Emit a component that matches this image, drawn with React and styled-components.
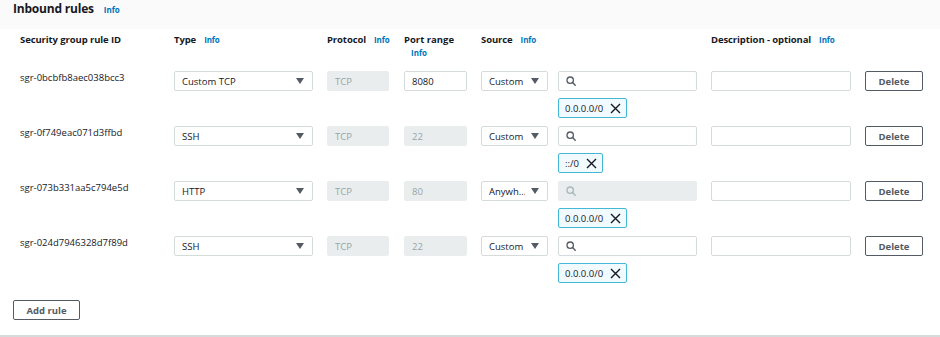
import React from 'react'
import styled, { createGlobalStyle } from 'styled-components'

const Global = createGlobalStyle`
  body {
    margin: 0;
    background: #ffffff;
    font-family: "Open Sans", "Noto Sans", sans-serif;
    color: #16191f;
  }
`

const Panel = styled.div`
  width: 940px;
  height: 337px;
  box-sizing: border-box;
  border-bottom: 2px solid #d5dbdb;
  display: flex;
  flex-direction: column;
`

const Header = styled.div`
  height: 29px;
  background: #fafafa;
  display: flex;
  align-items: flex-start;
  gap: 10px;
  padding: 0 0 0 13px;
  box-sizing: border-box;
`

const Title = styled.h2`
  margin: 0;
  font-size: 12px;
  font-weight: 700;
  line-height: 18px;
  letter-spacing: -0.2px;
`

const Info = styled.span`
  color: #0073bb;
  font-size: 8px;
  font-weight: 700;
  line-height: 12px;
  padding-top: ${p => p.$top || 0}px;
`

const Grid = styled.div`
  display: grid;
  grid-template-columns: 154px 153px 77px 77px 77px 153px 154px 58px;
  padding-left: 20px;
`

const HeadRow = styled(Grid)`
  height: 42px;
  padding-top: 4px;
  box-sizing: border-box;
`

const HeadCell = styled.div`
  display: flex;
  flex-wrap: wrap;
  align-items: baseline;
  column-gap: 8px;
  font-size: 9.5px;
  font-weight: 700;
  line-height: 14px;
  letter-spacing: -0.1px;
`

const Stacked = styled.div`
  display: flex;
  flex-direction: column;
  font-size: 9.5px;
  font-weight: 700;
  line-height: 14px;
  & > span:last-child {
    padding-left: 7px;
  }
`

const Row = styled(Grid)`
  height: 55px;
  align-content: start;
`

const IdText = styled.div`
  font-size: 9.5px;
  line-height: 14px;
  color: #16191f;
`

const Field = styled.div`
  box-sizing: border-box;
  width: ${p => p.$w}px;
  height: 20px;
  border: 1px solid ${p => (p.$disabled ? '#eaeded' : '#d5dbdb')};
  background: ${p => (p.$disabled ? '#eaeded' : '#ffffff')};
  border-radius: 2px;
  display: flex;
  align-items: center;
  padding: 0 8px 0 7px;
  font-size: 9.5px;
  color: ${p => (p.$disabled ? '#95a5a6' : '#16191f')};
  gap: 6px;
`

const SelectText = styled.span`
  flex: 1;
  white-space: nowrap;
  overflow: hidden;
`

const Caret = styled.span`
  width: 0;
  height: 0;
  border-left: 4px solid transparent;
  border-right: 4px solid transparent;
  border-top: 6px solid #545b64;
`

const SourceCol = styled.div`
  display: flex;
  flex-direction: column;
  gap: 7px;
`

const Token = styled.div`
  box-sizing: border-box;
  height: 20px;
  align-self: flex-start;
  display: flex;
  align-items: center;
  gap: 7px;
  padding: 0 5px 0 6px;
  border: 1px solid #44b9d6;
  background: #f1faff;
  border-radius: 2px;
  font-size: 9.5px;
  color: #16191f;
`

const Button = styled.button`
  box-sizing: border-box;
  width: ${p => p.$w}px;
  height: 20px;
  border: 1px solid #545b64;
  border-radius: 2px;
  background: #ffffff;
  color: #545b64;
  font-family: inherit;
  font-size: 9.5px;
  font-weight: 700;
  padding: 0;
  cursor: pointer;
`

const Footer = styled.div`
  display: flex;
  padding: 9px 0 0 13px;
`

const SearchIcon = ({ color }) => (
  <svg width="10" height="10" viewBox="0 0 10 10" fill="none">
    <circle cx="4.2" cy="4.2" r="3.2" stroke={color} strokeWidth="1.3" />
    <line x1="6.6" y1="6.6" x2="9.2" y2="9.2" stroke={color} strokeWidth="1.4" strokeLinecap="round" />
  </svg>
)

const CloseIcon = () => (
  <svg width="11" height="11" viewBox="0 0 11 11">
    <path d="M1 1 L10 10 M10 1 L1 10" stroke="#16191f" strokeWidth="1.4" />
  </svg>
)

const rules = [
  { id: 'sgr-0bcbfb8aec038bcc3', type: 'Custom TCP', port: '8080', portEditable: true, source: 'Custom', cidr: '0.0.0.0/0' },
  { id: 'sgr-0f749eac071d3ffbd', type: 'SSH', port: '22', source: 'Custom', cidr: '::/0' },
  { id: 'sgr-073b331aa5c794e5d', type: 'HTTP', port: '80', source: 'Anywh...', cidr: '0.0.0.0/0', searchDisabled: true },
  { id: 'sgr-024d7946328d7f89d', type: 'SSH', port: '22', source: 'Custom', cidr: '0.0.0.0/0' },
]

export default function App() {
  return (
    <>
      <Global />
      <Panel>
        <Header>
          <Title>Inbound rules</Title>
          <Info $top={4}>Info</Info>
        </Header>
        <HeadRow>
          <HeadCell>Security group rule ID</HeadCell>
          <HeadCell>Type <Info>Info</Info></HeadCell>
          <HeadCell>Protocol <Info>Info</Info></HeadCell>
          <Stacked>
            <span>Port range</span>
            <Info>Info</Info>
          </Stacked>
          <HeadCell>Source <Info>Info</Info></HeadCell>
          <HeadCell />
          <HeadCell>Description - optional <Info>Info</Info></HeadCell>
          <HeadCell />
        </HeadRow>
        {rules.map(r => (
          <Row key={r.id}>
            <IdText>{r.id}</IdText>
            <Field $w={139}>
              <SelectText>{r.type}</SelectText>
              <Caret />
            </Field>
            <Field $w={62} $disabled>TCP</Field>
            <Field $w={63} $disabled={!r.portEditable}>{r.port}</Field>
            <Field $w={67}>
              <SelectText>{r.source}</SelectText>
              <Caret />
            </Field>
            <SourceCol>
              <Field $w={139} $disabled={r.searchDisabled}>
                <SearchIcon color={r.searchDisabled ? '#aab7b8' : '#545b64'} />
              </Field>
              <Token>
                {r.cidr}
                <CloseIcon />
              </Token>
            </SourceCol>
            <Field $w={140} />
            <Button $w={58}>Delete</Button>
          </Row>
        ))}
        <Footer>
          <Button $w={67}>Add rule</Button>
        </Footer>
      </Panel>
    </>
  )
}
